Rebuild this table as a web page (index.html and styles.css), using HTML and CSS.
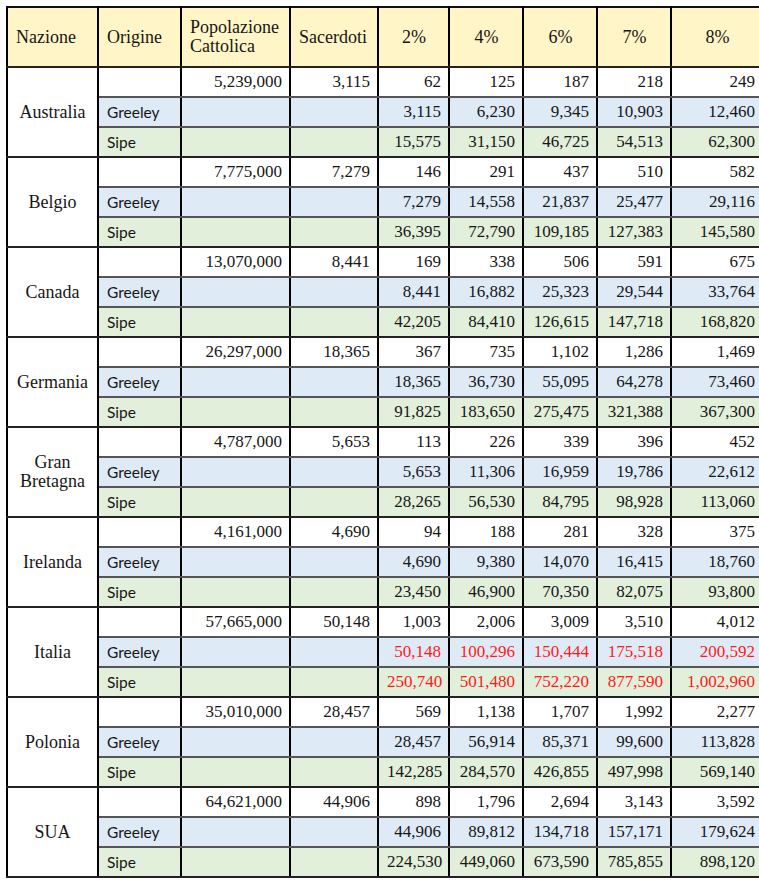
FILE: index.html
```html
<!DOCTYPE html>
<html lang="it">
<head>
<meta charset="utf-8">
<title>Sacerdoti</title>
<link rel="stylesheet" href="styles.css">
</head>
<body>
<div class="wrap">
<table class="tbl">
<colgroup>
<col class="c-naz"><col class="c-ori"><col class="c-pop"><col class="c-sac">
<col class="c-p"><col class="c-p4"><col class="c-p4"><col class="c-p4"><col class="c-p8">
</colgroup>
<thead>
<tr class="head">
<th class="hl">Nazione</th><th class="hl">Origine</th><th class="hl">Popolazione<br>Cattolica</th><th class="hl">Sacerdoti</th>
<th>2%</th><th>4%</th><th>6%</th><th>7%</th><th>8%</th>
</tr>
</thead>
<tbody>
<tr class="r1 gtop"><td class="naz" rowspan="3">Australia</td><td class="ori"></td><td>5,239,000</td><td>3,115</td><td>62</td><td>125</td><td>187</td><td>218</td><td>249</td></tr>
<tr class="gr"><td class="ori">Greeley</td><td></td><td></td><td>3,115</td><td>6,230</td><td>9,345</td><td>10,903</td><td>12,460</td></tr>
<tr class="sp"><td class="ori">Sipe</td><td></td><td></td><td>15,575</td><td>31,150</td><td>46,725</td><td>54,513</td><td>62,300</td></tr>

<tr class="r1 gtop"><td class="naz" rowspan="3">Belgio</td><td class="ori"></td><td>7,775,000</td><td>7,279</td><td>146</td><td>291</td><td>437</td><td>510</td><td>582</td></tr>
<tr class="gr"><td class="ori">Greeley</td><td></td><td></td><td>7,279</td><td>14,558</td><td>21,837</td><td>25,477</td><td>29,116</td></tr>
<tr class="sp"><td class="ori">Sipe</td><td></td><td></td><td>36,395</td><td>72,790</td><td>109,185</td><td>127,383</td><td>145,580</td></tr>

<tr class="r1 gtop"><td class="naz" rowspan="3">Canada</td><td class="ori"></td><td>13,070,000</td><td>8,441</td><td>169</td><td>338</td><td>506</td><td>591</td><td>675</td></tr>
<tr class="gr"><td class="ori">Greeley</td><td></td><td></td><td>8,441</td><td>16,882</td><td>25,323</td><td>29,544</td><td>33,764</td></tr>
<tr class="sp"><td class="ori">Sipe</td><td></td><td></td><td>42,205</td><td>84,410</td><td>126,615</td><td>147,718</td><td>168,820</td></tr>

<tr class="r1 gtop"><td class="naz" rowspan="3">Germania</td><td class="ori"></td><td>26,297,000</td><td>18,365</td><td>367</td><td>735</td><td>1,102</td><td>1,286</td><td>1,469</td></tr>
<tr class="gr"><td class="ori">Greeley</td><td></td><td></td><td>18,365</td><td>36,730</td><td>55,095</td><td>64,278</td><td>73,460</td></tr>
<tr class="sp"><td class="ori">Sipe</td><td></td><td></td><td>91,825</td><td>183,650</td><td>275,475</td><td>321,388</td><td>367,300</td></tr>

<tr class="r1 gtop"><td class="naz" rowspan="3">Gran<br>Bretagna</td><td class="ori"></td><td>4,787,000</td><td>5,653</td><td>113</td><td>226</td><td>339</td><td>396</td><td>452</td></tr>
<tr class="gr"><td class="ori">Greeley</td><td></td><td></td><td>5,653</td><td>11,306</td><td>16,959</td><td>19,786</td><td>22,612</td></tr>
<tr class="sp"><td class="ori">Sipe</td><td></td><td></td><td>28,265</td><td>56,530</td><td>84,795</td><td>98,928</td><td>113,060</td></tr>

<tr class="r1 gtop"><td class="naz" rowspan="3">Irelanda</td><td class="ori"></td><td>4,161,000</td><td>4,690</td><td>94</td><td>188</td><td>281</td><td>328</td><td>375</td></tr>
<tr class="gr"><td class="ori">Greeley</td><td></td><td></td><td>4,690</td><td>9,380</td><td>14,070</td><td>16,415</td><td>18,760</td></tr>
<tr class="sp"><td class="ori">Sipe</td><td></td><td></td><td>23,450</td><td>46,900</td><td>70,350</td><td>82,075</td><td>93,800</td></tr>

<tr class="r1 gtop"><td class="naz" rowspan="3">Italia</td><td class="ori"></td><td>57,665,000</td><td>50,148</td><td>1,003</td><td>2,006</td><td>3,009</td><td>3,510</td><td>4,012</td></tr>
<tr class="gr"><td class="ori">Greeley</td><td></td><td></td><td class="red">50,148</td><td class="red">100,296</td><td class="red">150,444</td><td class="red">175,518</td><td class="red">200,592</td></tr>
<tr class="sp"><td class="ori">Sipe</td><td></td><td></td><td class="red">250,740</td><td class="red">501,480</td><td class="red">752,220</td><td class="red">877,590</td><td class="red">1,002,960</td></tr>

<tr class="r1 gtop"><td class="naz" rowspan="3">Polonia</td><td class="ori"></td><td>35,010,000</td><td>28,457</td><td>569</td><td>1,138</td><td>1,707</td><td>1,992</td><td>2,277</td></tr>
<tr class="gr"><td class="ori">Greeley</td><td></td><td></td><td>28,457</td><td>56,914</td><td>85,371</td><td>99,600</td><td>113,828</td></tr>
<tr class="sp"><td class="ori">Sipe</td><td></td><td></td><td>142,285</td><td>284,570</td><td>426,855</td><td>497,998</td><td>569,140</td></tr>

<tr class="r1 gtop"><td class="naz" rowspan="3">SUA</td><td class="ori"></td><td>64,621,000</td><td>44,906</td><td>898</td><td>1,796</td><td>2,694</td><td>3,143</td><td>3,592</td></tr>
<tr class="gr"><td class="ori">Greeley</td><td></td><td></td><td>44,906</td><td>89,812</td><td>134,718</td><td>157,171</td><td>179,624</td></tr>
<tr class="sp"><td class="ori">Sipe</td><td></td><td></td><td>224,530</td><td>449,060</td><td>673,590</td><td>785,855</td><td>898,120</td></tr>
</tbody>
</table>
</div>
</body>
</html>
```

FILE: styles.css
```css
html, body {
  margin: 0;
  padding: 0;
  background: #fff;
  overflow: hidden;
}
.wrap {
  padding: 6px 0 0 6px;
  width: 770px;
}
.tbl {
  border-collapse: collapse;
  table-layout: fixed;
  width: 756px;
  font-family: "Liberation Serif", "DejaVu Serif", serif;
  font-size: 17px;
  color: #161616;
}
.c-naz { width: 91px; }
.c-ori { width: 83px; }
.c-pop { width: 109px; }
.c-sac { width: 88px; }
.c-p { width: 71px; }
.c-p4 { width: 74px; }
.c-p8 { width: 92px; }

.tbl th, .tbl td {
  border-left: 2px solid #000;
  border-right: 2px solid #000;
  padding: 0 7px 0 8px;
  overflow: hidden;
  white-space: nowrap;
}
.head th {
  background: #fff5c6;
  height: 58px;
  font-weight: normal;
  font-size: 18px;
  text-align: center;
  line-height: 19px;
  border-top: 2px solid #111;
  border-bottom: 2px solid #222;
  vertical-align: middle;
}
.head th.hl {
  text-align: left;
}
.tbl td {
  height: 28px;
  text-align: right;
  vertical-align: middle;
  line-height: 20px;
  border-top: 2px solid #555;
  border-bottom: 2px solid #555;
}
.tbl tr.gtop td {
  border-top: 2px solid #222;
}
.tbl tr.sp td {
  border-bottom: 2px solid #222;
}
.tbl td.naz {
  text-align: center;
  background: #fff;
  white-space: normal;
  font-size: 18px;
  line-height: 19px;
  border-top: 2px solid #222;
  border-bottom: 2px solid #222;
  padding: 0 4px;
}
.tbl td.ori {
  text-align: left;
  font-family: Lato, "Liberation Sans", sans-serif;
  font-size: 15.5px;
  padding-left: 8px;
}
.r1 td { background: #fff; }
.gr td { background: #deeaf6; }
.sp td { background: #e2efda; }
.tbl td.red { color: #ff1a1a; }
```
